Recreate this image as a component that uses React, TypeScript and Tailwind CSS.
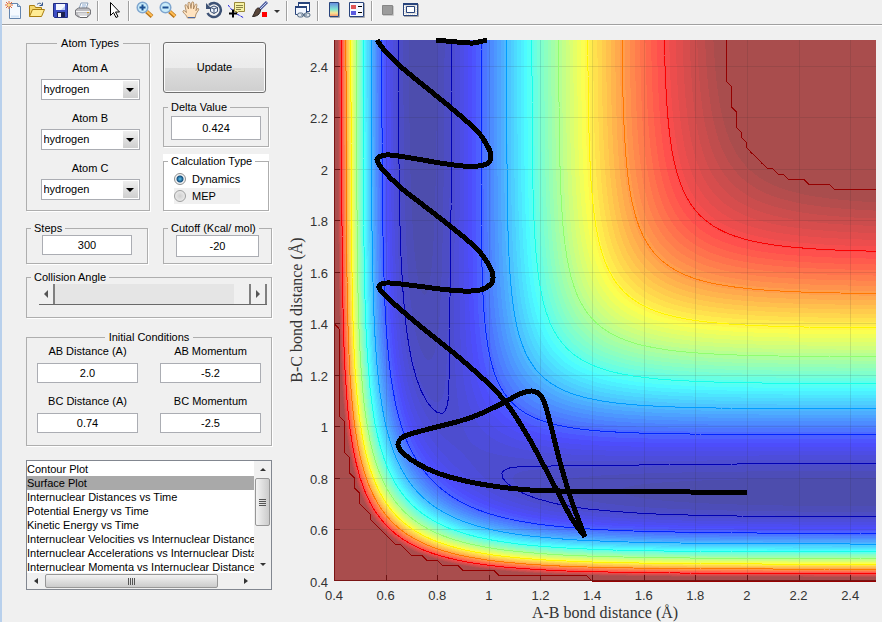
import React, { useId } from "react";

// Plot frame, in chart units
const PLOT = { left: 334, top: 40, width: 542, height: 541 };
const AXIS_MIN = 0.4;
const AXIS_MAX = 2.5;
const SPAN = AXIS_MAX - AXIS_MIN;

// LEPS parameters for H + H2
const DE = 109.5;
const BETA = 1.942;
const RE = 0.7417;
const DELTA = 0.424;
const CUTOFF = -22.2;

const xPos = (r: number) => PLOT.left + ((r - AXIS_MIN) / SPAN) * PLOT.width;
const yPos = (r: number) => PLOT.top + PLOT.height - ((r - AXIS_MIN) / SPAN) * PLOT.height;

const pair = (r: number) => {
  const k = DELTA * DELTA;
  const u = Math.exp(-BETA * (r - RE));
  const singlet = u * u - 2 * u;
  const triplet = (u * u + 2 * u) / 2;
  return [
    (singlet * (1 + k) + triplet * (1 - k)) / 2,
    (singlet * (1 + k) - triplet * (1 - k)) / 2,
  ];
};

const energy = (ab: number, bc: number) => {
  const [q1, j1] = pair(ab);
  const [q2, j2] = pair(bc);
  const [q3, j3] = pair(ab + bc);
  const root = Math.sqrt(((j1 - j2) ** 2 + (j2 - j3) ** 2 + (j1 - j3) ** 2) / 2);
  return Math.min(CUTOFF, (DE * (q1 + q2 + q3 - root)) / (1 + DELTA * DELTA));
};

const jet = (t: number, alpha: number) => {
  const channel = (centre: number) => {
    const v = Math.max(0, Math.min(1, 1.5 - Math.abs(4 * t - centre)));
    return Math.round(255 * (1 - alpha) + 255 * alpha * v);
  };
  return `rgb(${channel(3)},${channel(2)},${channel(1)})`;
};

const fraction = (v: number) => (v + DE) / (CUTOFF + DE);

// Colour bands, stored as horizontal runs per colour
const BAND_COUNT = 64;
const bands = (() => {
  const runs: string[] = Array(BAND_COUNT).fill("");
  for (let row = 0; row < PLOT.height; row++) {
    const bc = AXIS_MIN + ((PLOT.height - row - 0.5) / PLOT.height) * SPAN;
    let start = 0;
    let current = -1;
    for (let col = 0; col <= PLOT.width; col++) {
      let band = -2;
      if (col < PLOT.width) {
        const ab = AXIS_MIN + ((col + 0.5) / PLOT.width) * SPAN;
        band = Math.max(0, Math.min(BAND_COUNT - 1, Math.floor(fraction(energy(ab, bc)) * BAND_COUNT)));
      }
      if (band !== current) {
        if (current >= 0) {
          runs[current] += `M${PLOT.left + start} ${PLOT.top + row}h${col - start}v1h${start - col}z`;
        }
        start = col;
        current = band;
      }
    }
  }
  return runs.map((d, i) => ({ d, color: jet((i + 1) / BAND_COUNT - 0.005, 0.7) }));
})();

// Contour lines from marching squares over a 0.02 A grid
const GRID = 105;
const contours = (() => {
  const coord = (i: number) => AXIS_MIN + (i * SPAN) / GRID;
  const grid = Array.from({ length: GRID + 1 }, (_, j) =>
    Array.from({ length: GRID + 1 }, (_, i) => energy(coord(i), coord(j)))
  );
  const levels = [-105, -95.4, -85.2, -74.9, -64.4, -54, -43.4, -32.8, CUTOFF - 0.0001];
  return levels.map((level) => {
    let d = "";
    for (let j = 0; j < GRID; j++) {
      for (let i = 0; i < GRID; i++) {
        const corners = [
          [i, j],
          [i + 1, j],
          [i + 1, j + 1],
          [i, j + 1],
        ];
        const hits: string[] = [];
        corners.forEach(([ax, ay], n) => {
          const [bx, by] = corners[(n + 1) % 4];
          const va = grid[ay][ax];
          const vb = grid[by][bx];
          if (va < level !== vb < level) {
            const t = (level - va) / (vb - va);
            const x = xPos(coord(ax + (bx - ax) * t));
            const y = yPos(coord(ay + (by - ay) * t));
            hits.push(`${x.toFixed(1)} ${y.toFixed(1)}`);
          }
        });
        for (let n = 0; n + 1 < hits.length; n += 2) d += `M${hits[n]}L${hits[n + 1]}`;
      }
    }
    return { d, color: jet(Math.min(0.98, fraction(level)), 1) };
  });
})();

// The path splits at the sharp turning point so that it stays pointed
const approach: [number, number][] = [
  [747, 493], [690, 492], [640, 491], [590, 492], [560, 491], [530, 490], [500, 487], [470, 482],
  [440, 474], [418, 464], [404, 454], [398, 445], [403, 437], [425, 430], [460, 421], [480, 414],
  [503, 403], [520, 394], [532, 391], [541, 396], [547, 411], [560, 462], [572, 502], [585, 537],
];

const departure: [number, number][] = [
  [585, 537], [572, 519], [555, 487], [530, 440], [512, 411], [497, 392], [478, 374], [455, 354],
  [425, 330], [407, 315], [390, 300], [379, 288], [381, 284], [390, 283], [417, 286], [440, 289],
  [463, 291], [480, 290], [491, 284], [493, 277], [490, 267], [477, 249], [450, 226], [423, 205],
  [400, 187], [383, 170], [377, 160], [381, 156], [390, 155], [417, 159], [440, 163], [463, 166],
  [478, 166], [488, 163], [491, 156], [488, 147], [478, 132], [450, 107], [423, 85], [400, 66],
  [385, 51], [377, 40],
];

const unit = (a: [number, number], b: [number, number]) => {
  const length = Math.hypot(b[0] - a[0], b[1] - a[1]);
  return [(b[0] - a[0]) / length, (b[1] - a[1]) / length];
};

// Bezier handles follow the neighbours' direction and scale with the segment
const smooth = (pts: [number, number][]) =>
  pts.slice(1).reduce((d, p, n) => {
    const prev = pts[n];
    const reach = Math.hypot(p[0] - prev[0], p[1] - prev[1]) / 3;
    const out = unit(pts[Math.max(0, n - 1)], p);
    const into = unit(prev, pts[Math.min(pts.length - 1, n + 2)]);
    const c1 = [prev[0] + out[0] * reach, prev[1] + out[1] * reach];
    const c2 = [p[0] - into[0] * reach, p[1] - into[1] * reach];
    return `${d}C${c1.join(" ")} ${c2.join(" ")} ${p.join(" ")}`;
  }, `M${pts[0].join(" ")}`);

const ticks = [0.4, 0.6, 0.8, 1, 1.2, 1.4, 1.6, 1.8, 2, 2.2, 2.4];

const SurfacePlot = () => (
  <svg viewBox="282 26 600 596" className="block w-full" role="img" aria-label="Surface plot">
    <g shapeRendering="crispEdges">
      {bands.map((band, i) => (
        <path key={i} d={band.d} fill={band.color} />
      ))}
      {ticks.slice(1).map((t) => (
        <path
          key={t}
          d={`M${Math.round(xPos(t))} 40V581M334 ${Math.round(yPos(t))}H876`}
          stroke="#262626"
          strokeOpacity="0.12"
        />
      ))}
      {contours.map((line, i) => (
        <path key={i} d={line.d} stroke={line.color} fill="none" />
      ))}
      <path d="M334.5 40V580.5H876" stroke="#7a1414" fill="none" />
      {ticks.slice(1).map((t) => (
        <path
          key={t}
          d={`M${Math.round(xPos(t))} 581v-6M334 ${Math.round(yPos(t))}h6`}
          stroke="#6b1212"
        />
      ))}
      <g stroke="#000" strokeWidth="5" fill="none" strokeLinejoin="round">
        <path d={smooth(approach)} />
        <path d={smooth(departure)} />
        <path d={smooth([[436, 40], [457, 42], [473, 43], [487, 40]])} />
      </g>
    </g>
    <g fill="#333" fontSize="13" fontFamily="'Liberation Sans', Arial, sans-serif">
      {ticks.map((t) => (
        <React.Fragment key={t}>
          <text x={xPos(t)} y="600" textAnchor="middle">{t}</text>
          <text x="328" y={yPos(t) + 6} textAnchor="end">{t}</text>
        </React.Fragment>
      ))}
    </g>
    <g fill="#333" fontSize="16" fontFamily="'Liberation Serif', 'Times New Roman', serif" textAnchor="middle">
      <text x="605" y="618">A-B bond distance (Å)</text>
      <text transform="translate(302 310) rotate(-90)">B-C bond distance (Å)</text>
    </g>
  </svg>
);

const Icon = ({ children }: { children: React.ReactNode }) => (
  <svg viewBox="0 0 18 18" className="size-[18px]" fill="none" aria-hidden="true">
    {children}
  </svg>
);

const Magnifier = ({ plus }: { plus?: boolean }) => (
  <Icon>
    <path d="M10.5 10.5l5.5 5" stroke="#b87316" strokeWidth="4" />
    <path d="M10.5 10l5.5 5" stroke="#ffbd55" strokeWidth="2" />
    <circle cx="6.5" cy="6.5" r="5.3" fill="#c9ecfa" stroke="#7fa6cf" strokeWidth="1.5" />
    <path d={plus ? "M3.5 6.5h6M6.5 3.5v6" : "M3.5 6.5h6"} stroke="#1d4f91" strokeWidth="2" />
  </Icon>
);

const tools: Record<string, React.ReactNode> = {
  "New Figure": (
    <Icon>
      <path d="M4.500 2.500h8l3 3v12h-11z" fill="#f4f9ff" stroke="#6384ad" />
      <path d="M12.500 2.500v3h3" fill="#c5d8ee" stroke="#6384ad" />
      <path d="M6 15.500h8" stroke="#d5e5f7" strokeWidth="2" />
      <path d="M1 1l6 6M7 1L1 7M4 0v8M0 4h8" stroke="#e06a3b" />
      <circle cx="4" cy="4" r="1.500" fill="#ffe08a" />
    </Icon>
  ),
  "Open File": (
    <Icon>
      <path d="M1.500 15.500v-11h5l1 2h6v3" fill="#f5d66d" stroke="#a97e12" />
      <path d="M1.500 15.500l3-7h12l-3 7z" fill="#ffec94" stroke="#a97e12" />
      <path d="M9 3.500c2-2 4-1.500 5 .5M14.500 1.500v3h-3" stroke="#34558b" />
    </Icon>
  ),
  "Save Figure": (
    <Icon>
      <path d="M2.500 2.500h14v14h-13l-1-1z" fill="#3e4fc4" stroke="#202c80" />
      <path d="M5 3h9v6H5z" fill="#f3f6ff" />
      <path d="M10 9h4V5z" fill="#bccdf4" />
      <path d="M6 11h8v5H6z" fill="#1c2150" />
      <path d="M7 12h3v4H7z" fill="#f5f5fa" />
    </Icon>
  ),
  "Print Figure": (
    <Icon>
      <path d="M5 8l2-6h7l-2 6z" fill="#fff" stroke="#8aa0ba" />
      <path d="M8 4h4M7.500 6h4" stroke="#88a8d0" />
      <path d="M1.500 9l3-2h10l2 2v4l-3 3h-9l-3-2z" fill="#bcbcc0" stroke="#77777c" />
      <path d="M2 10.500h14M4 13h9" stroke="#f4f4f4" />
      <path d="M4 14.500l2 2h7l1-2" fill="#fff" stroke="#66666a" />
      <path d="M13 11.500h2" stroke="#d39a28" />
    </Icon>
  ),
  "Edit Plot": (
    <Icon>
      <path d="M5.500 1.500v13l3-3 2.500 5 2-1-2.500-4.500h4z" fill="#fff" stroke="#000" />
    </Icon>
  ),
  "Zoom In": <Magnifier plus />,
  "Zoom Out": <Magnifier />,
  Pan: (
    <Icon>
      <path
        d="M5.500 17c-1-3-3-4-4.500-6-.5-1.500 1-2 2-.8l1.500 1.300L3 5c-.2-1.600 1.400-1.900 1.900-.5L6.500 8 6 2.500c0-1.600 1.800-1.700 2.100-.2L9 7.500l.7-5.700c.3-1.400 2-1.200 2 .3L11.500 8l1.700-4.300c.6-1.200 2-.7 1.700.7l-1 5.300 1.200-1.800c.9-1 2-.3 1.500 1L14 13l-1 4z"
        fill="#ffe3c0"
        stroke="#a07a50"
        strokeWidth="0.8"
      />
      <path d="M6 16.500h7" stroke="#4a69a5" />
    </Icon>
  ),
  "Rotate 3D": (
    <Icon>
      <path d="M4 4a7 7 0 1 1-1.500 8" stroke="#3e5275" strokeWidth="2.500" />
      <path d="M1 2v6h6z" fill="#3e5275" />
      <path d="M9 5l3.500 1.500v4L9 12.500l-3.500-2v-4zM5.500 6.500L9 8l3.500-1.500M9 8v4.500" fill="#eef4ff" stroke="#3e5275" />
    </Icon>
  ),
  "Data Cursor": (
    <Icon>
      <path d="M0 4l4 5M9 13l7 4" stroke="#2222dd" strokeDasharray="3 1" />
      <path d="M6.500 1.500h10v9h-6l-2 2v-2h-2z" fill="#f6f3a4" stroke="#98883a" />
      <path d="M8 4.500h7M8 6.500h7M8 8.500h5" stroke="#8b8347" />
      <path d="M1 12.500h8M5 8.500v8" stroke="#000" strokeWidth="2" />
    </Icon>
  ),
  Brush: (
    <Icon>
      <path d="M16 1L8 9" stroke="#4a5a9c" strokeWidth="3" />
      <path d="M15.500 1.500L9 8" stroke="#c7d2ee" />
      <path d="M9.500 8.500l-2-1.500c-3 0-3 4-6 8.500 4 0 8-2 8-7z" fill="#59463a" stroke="#2d2420" />
      <path d="M11 11h5v5h-5z" fill="#f00" />
    </Icon>
  ),
  "Link Plot": (
    <Icon>
      <path d="M4.500 1.500h11v9h-11z" fill="#fff" stroke="#28447c" />
      <path d="M4 2h12" stroke="#28447c" strokeWidth="2" />
      <path d="M1.500 5.500h11v8h-11z" fill="#f3f7ff" stroke="#28447c" />
      <path d="M1 6h12" stroke="#28447c" strokeWidth="2" />
      <rect x="3.500" y="12" width="6" height="4" rx="2" fill="#e1e8ef" stroke="#536982" />
      <rect x="10" y="12" width="6" height="4" rx="2" fill="#e1e8ef" stroke="#536982" />
      <path d="M7 14h6" stroke="#536982" />
    </Icon>
  ),
  "Insert Colorbar": (
    <Icon>
      <defs>
        <linearGradient id="colorbar" x1="0" y1="0" x2="0" y2="1">
          <stop offset="0" stopColor="#6387df" />
          <stop offset="0.5" stopColor="#83e6d2" />
          <stop offset="0.75" stopColor="#fbe493" />
          <stop offset="1" stopColor="#f08d6b" />
        </linearGradient>
      </defs>
      <path d="M4.500 1.500h9v14h-9z" fill="url(#colorbar)" stroke="#28447c" />
      <path d="M5 16.500h9.500V2" stroke="#a9a9ad" />
    </Icon>
  ),
  "Insert Legend": (
    <Icon>
      <path d="M1.500 1.500h14v14h-14z" fill="#f7f9ff" stroke="#28447c" />
      <path d="M2 16.500h14.500V2" stroke="#a9a9ad" />
      <path d="M3 4h5v4H3z" fill="#df5656" />
      <path d="M3 10h5v4H3z" fill="#5b5bdf" />
      <path d="M10 5.500h4M10 11.500h4" stroke="#000" />
    </Icon>
  ),
  "Hide Plot Tools": (
    <Icon>
      <path d="M3.500 4.500h10v9h-10z" fill="#9b9b9b" stroke="#868686" />
      <path d="M4 14.500h10.500V5" stroke="#c9c9c9" />
    </Icon>
  ),
  "Show Plot Tools": (
    <Icon>
      <path d="M1.500 2.500h14v12h-14z" fill="#e2e2e2" stroke="#28447c" />
      <path d="M1 3h15" stroke="#28447c" strokeWidth="2" />
      <path d="M4.500 5.500h8v6h-8z" fill="#fff" stroke="#28447c" />
      <path d="M2.500 5v9M14.500 5v9M3 13.500h11" stroke="#fff" strokeDasharray="1 1" />
      <path d="M2 15.500h14.500V3" stroke="#a9a9ad" />
    </Icon>
  ),
};

const toolGroups = [
  ["New Figure", "Open File", "Save Figure", "Print Figure"],
  ["Edit Plot"],
  ["Zoom In", "Zoom Out", "Pan", "Rotate 3D", "Data Cursor", "Brush"],
  ["Link Plot"],
  ["Insert Colorbar", "Insert Legend"],
  ["Hide Plot Tools", "Show Plot Tools"],
];

const Toolbar = () => (
  <div role="toolbar" className="flex h-[25px] items-start border-b border-[#a0a0a0] pt-px">
    {toolGroups.map((group, g) => (
      <div key={g} className="flex">
        {g > 0 && (
          <span className="flex w-2 justify-center">
            <span className="h-5 w-0.5 border-l border-r border-l-[#a0a0a0] border-r-white" />
          </span>
        )}
        {group.map((name) => (
          <button key={name} type="button" aria-label={name} className="flex w-[23px] justify-center">
            {tools[name]}
          </button>
        ))}
        {group.includes("Brush") && (
          <button type="button" aria-label="Brush colors" className="flex w-3 items-center justify-center">
            <span className="border-x-[3px] border-t-[3px] border-x-transparent border-t-[#333]" />
          </button>
        )}
      </div>
    ))}
  </div>
);

const Group = ({ title, center, className = "", children }: {
  title: string;
  center?: boolean;
  className?: string;
  children: React.ReactNode;
}) => (
  <fieldset className={`min-w-0 border border-[#aeaeae] shadow-[1px_1px_0_#fff] ${className}`}>
    <legend className={center ? "mx-auto px-1 leading-[14px]" : "ml-1 px-[3px] leading-[14px]"}>{title}</legend>
    {children}
  </fieldset>
);

const AtomSelect = ({ label }: { label: string }) => {
  const id = useId();
  return (
    <div className="mt-[11px] flex flex-col items-center gap-1">
      <label htmlFor={id} className="leading-[14px]">{label}</label>
      <div className="relative w-[99px]">
        <select
          id={id}
          defaultValue="hydrogen"
          className="block h-[21px] w-full appearance-none border border-[#abadb3] bg-white pl-0.5 outline-none"
        >
          <option>hydrogen</option>
        </select>
        <span className="pointer-events-none absolute inset-y-0.5 right-0.5 flex w-[15px] items-center justify-center bg-linear-to-b from-[#efefef] to-[#cfcfcf]">
          <span className="border-x-4 border-t-4 border-x-transparent border-t-black" />
        </span>
      </div>
    </div>
  );
};

const NumberBox = ({ className, ...props }: React.ComponentProps<"input">) => (
  <input
    type="text"
    className={`block border border-[#abadb3] bg-white text-center outline-none ${className}`}
    {...props}
  />
);

const conditions = [
  { label: "AB Distance (A)", value: "2.0" },
  { label: "AB Momentum", value: "-5.2" },
  { label: "BC Distance (A)", value: "0.74" },
  { label: "BC Momentum", value: "-2.5" },
];

const plots = [
  "Contour Plot",
  "Surface Plot",
  "Internuclear Distances vs Time",
  "Potential Energy vs Time",
  "Kinetic Energy vs Time",
  "Internuclear Velocities vs Internuclear Distance",
  "Internuclear Accelerations vs Internuclear Distance",
  "Internuclear Momenta vs Internuclear Distance",
];

const PlotList = () => (
  <div className="mt-3.5 grid h-[130px] grid-cols-[1fr_17px] grid-rows-[1fr_16px] border border-[#828790] bg-white">
    <div role="listbox" aria-label="Plot" className="overflow-hidden pt-px">
      {plots.map((name) => (
        <div
          key={name}
          role="option"
          aria-selected={name === "Surface Plot"}
          className="h-3.5 whitespace-nowrap leading-[14px] aria-selected:bg-[#a9a9a9]"
        >
          {name}
        </div>
      ))}
    </div>
    <div className="flex flex-col items-center bg-[#f0f0f0]">
      <span className="flex h-[17px] items-center">
        <span className="border-x-[3px] border-b-[3px] border-x-transparent border-b-[#333]" />
      </span>
      <span className="flex h-12 w-[15px] flex-col items-center justify-center gap-px rounded-xs border border-[#979797] bg-linear-to-r from-[#f3f3f3] to-[#cbcbcb]">
        <span className="h-px w-[7px] bg-[#555]" />
        <span className="h-px w-[7px] bg-[#555]" />
        <span className="h-px w-[7px] bg-[#555]" />
        <span className="h-px w-[7px] bg-[#555]" />
      </span>
      <span className="mt-auto flex h-[17px] items-center">
        <span className="border-x-[3px] border-t-[3px] border-x-transparent border-t-[#333]" />
      </span>
    </div>
    <div className="flex items-center bg-[#f0f0f0]">
      <span className="flex w-[18px] justify-center">
        <span className="border-y-[3px] border-r-4 border-y-transparent border-r-[#333]" />
      </span>
      <span className="flex h-3.5 w-[173px] items-center justify-center gap-px rounded-xs border border-[#979797] bg-linear-to-b from-[#f3f3f3] to-[#cbcbcb]">
        <span className="h-[7px] w-px bg-[#555]" />
        <span className="h-[7px] w-px bg-[#555]" />
        <span className="h-[7px] w-px bg-[#555]" />
        <span className="h-[7px] w-px bg-[#555]" />
      </span>
      <span className="ml-auto flex w-4 justify-center">
        <span className="border-y-[3px] border-l-4 border-y-transparent border-l-[#333]" />
      </span>
    </div>
    <div className="bg-[#f0f0f0]" />
  </div>
);

const Controls = () => (
  <form className="w-[280px] shrink-0 pt-2.5 pr-2.5 pl-6" onSubmit={(e) => e.preventDefault()}>
    <div className="grid grid-cols-[124px_106px] gap-x-[13px]">
      <Group title="Atom Types" center className="pb-2.5 pl-1">
        <AtomSelect label="Atom A" />
        <AtomSelect label="Atom B" />
        <AtomSelect label="Atom C" />
      </Group>
      <div className="flex flex-col gap-[7px] pt-1.5">
        <button
          type="submit"
          className="h-[51px] w-[103px] rounded-[3px] border border-[#707070] bg-[linear-gradient(#f2f2f2,#ebebeb_50%,#dddddd_50%,#cfcfcf)] shadow-[inset_0_0_0_1px_#fafafa]"
        >
          Update
        </button>
        <Group title="Delta Value" className="pb-1.5">
          <NumberBox aria-label="Delta Value" defaultValue="0.424" className="mx-auto mt-0.5 h-6 w-[90px]" />
        </Group>
        <div className="bg-white">
          <Group title="Calculation Type" className="pb-1.5">
            <label className="ml-2.5 flex h-5 items-center gap-1.5 pt-0.5">
              <input
                type="radio"
                name="calc"
                defaultChecked
                className="size-3 appearance-none rounded-full border border-[#8e8f8f] bg-[#f4f4f4] checked:bg-[radial-gradient(circle,#5cc3ee_0,#14507f_3px,#f4f4f4_4px)]"
              />
              Dynamics
            </label>
            <label className="ml-2.5 flex h-4 w-[66px] items-center gap-1.5 bg-[#f0f0f0]">
              <input
                type="radio"
                name="calc"
                className="size-3 appearance-none rounded-full border border-[#9e9f9f] bg-[radial-gradient(circle,#cfcfcf,#f4f4f4)]"
              />
              MEP
            </label>
          </Group>
        </div>
      </div>
    </div>

    <div className="mt-2.5 grid grid-cols-[122px_109px] gap-x-[15px]">
      <Group title="Steps" className="pb-2">
        <NumberBox aria-label="Steps" defaultValue="300" className="mx-auto h-5 w-[90px]" />
      </Group>
      <Group title="Cutoff (Kcal/ mol)" className="pb-1.5">
        <NumberBox aria-label="Cutoff (Kcal/ mol)" defaultValue="-20" className="mx-auto h-[22px] w-[83px]" />
      </Group>
    </div>

    <Group title="Collision Angle" className="mt-1.5 pb-3">
      <div className="mr-1 ml-3 flex h-[21px] border-b border-[#696969]">
        <button type="button" aria-label="Decrease angle" className="flex w-4 items-center justify-center border-r-2 border-[#808080]">
          <span className="border-y-4 border-r-4 border-y-transparent border-r-[#555]" />
        </button>
        <input
          type="range"
          aria-label="Collision Angle"
          min={0}
          max={180}
          defaultValue={180}
          className="h-5 min-w-0 flex-1 appearance-none bg-[#e5e5e5] [&::-webkit-slider-thumb]:h-5 [&::-webkit-slider-thumb]:w-[17px] [&::-webkit-slider-thumb]:appearance-none [&::-webkit-slider-thumb]:border-r-2 [&::-webkit-slider-thumb]:border-[#808080] [&::-webkit-slider-thumb]:bg-[#f0f0f0]"
        />
        <button type="button" aria-label="Increase angle" className="flex w-4 items-center justify-center border-r-2 border-[#808080]">
          <span className="border-y-4 border-l-4 border-y-transparent border-l-[#555]" />
        </button>
      </div>
    </Group>

    <Group title="Initial Conditions" center className="mt-3 pb-3">
      <div className="grid grid-cols-[101px_101px] justify-center gap-x-[22px] gap-y-[11px]">
        {conditions.map(({ label, value }) => (
          <label key={label} className="flex flex-col gap-[5px] text-center leading-[14px]">
            {label}
            <NumberBox defaultValue={value} className="h-5 w-full" />
          </label>
        ))}
      </div>
    </Group>

    <PlotList />
  </form>
);

const App = () => (
  <div className="min-h-screen border-l-2 border-[#b8d0ec] bg-[#f0f0f0] font-['Liberation_Sans',Arial,sans-serif] text-[11px] text-black">
    <Toolbar />
    <main className="flex items-start border-t border-white">
      <Controls />
      <div className="min-w-0 flex-1">
        <SurfacePlot />
      </div>
    </main>
  </div>
);

export default App;
